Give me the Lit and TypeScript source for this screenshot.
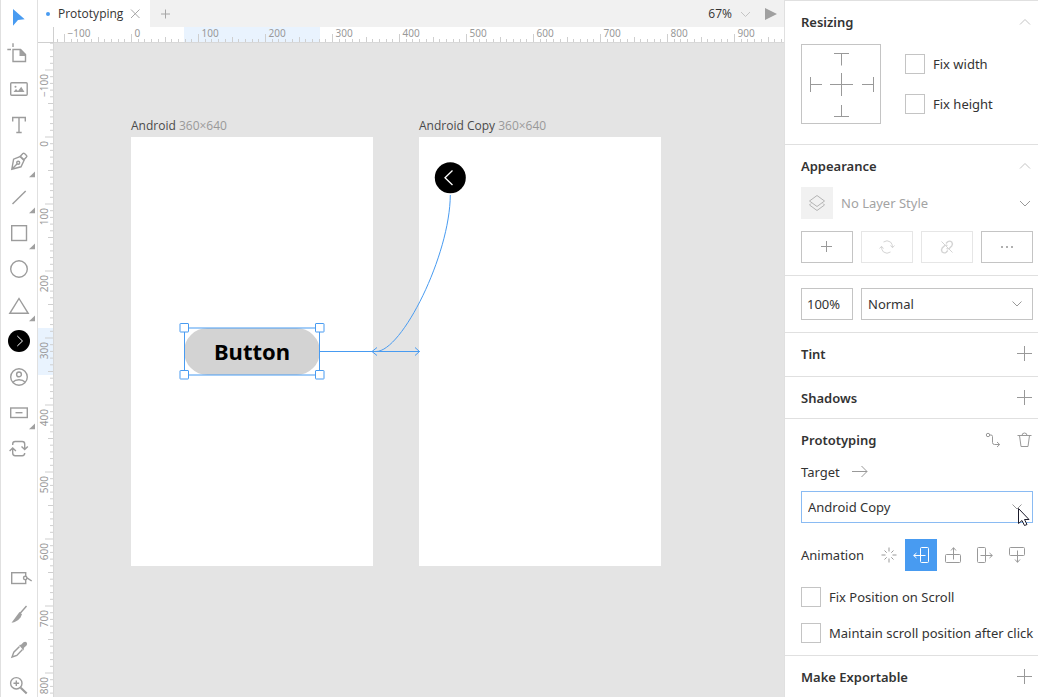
import { LitElement, html, svg, css, nothing } from "lit";
import { customElement, property, state } from "lit/decorators.js";
import { classMap } from "lit/directives/class-map.js";

const UNIT = 67;
const ORIGIN_X = 131;
const ORIGIN_Y = 137;

/* Tool glyphs share one 36x34 box whose vertical centre is y = 0. */
const tools = [
  { name: "Select", menu: false, art: svg`<path class="accent" d="M13-8 24.700 2.200 18 3 13 8.800z"/>` },
  { name: "Artboard", menu: false, art: svg`<path class="fold" d="M19.500-3.500H21l5 5v1.500h-6.500z"/><path d="M13-3.500h7.500L25.500 1.500v7H13zM7.300-3.500H11M13-9.800v3.800"/>` },
  { name: "Image", menu: false, art: svg`<rect x="10.700" y="-6.200" width="16.500" height="12.500" rx="1"/><path class="solid" d="M13.500 3l2.500-3 2 2 3.200-4.200L24.500 3z"/><circle class="solid" cx="15.500" cy="-2.300" r="1"/>` },
  { name: "Text", menu: false, art: svg`<path d="M12.700-3.500v-4h12.600v4M19-7.500V7.500M16.300 7.500h5.400"/>` },
  { name: "Pen", menu: true, art: svg`<path d="M11.800 8.300 13.600-1.800 20-4.500l4 4L21 5.800zM12 8l5-5"/><circle cx="18.200" cy="1.700" r="1.500"/><path d="M20.300-4.800l2.600-2.700q.8-.7 1.600 0l2 2q.8.8 0 1.600L24-1.200z"/>` },
  { name: "Line", menu: true, art: svg`<path d="M12.500 7 25.700-6"/>` },
  { name: "Rectangle", menu: true, art: svg`<rect x="11.700" y="-7.300" width="14.800" height="14.800"/>` },
  { name: "Ellipse", menu: false, art: svg`<circle cx="19" cy="0" r="8.300"/>` },
  { name: "Triangle", menu: true, art: svg`<path d="M19-6.500 28.200 8.300H9.800z"/>` },
  { name: "Icon", menu: false, art: svg`<circle class="disc" cx="19" cy="0" r="11"/><path class="light" d="M17.300-5 22.500 0l-5.200 5"/>` },
  { name: "Avatar", menu: false, art: svg`<circle cx="19" cy="0" r="8.300"/><circle cx="19" cy="-2.600" r="2.400"/><path d="M12.800 5.200Q15 2.800 19 2.800t6.200 2.400"/>` },
  { name: "Text Box", menu: true, art: svg`<rect x="10.700" y="-5" width="16.600" height="9.500"/><path d="M15.500-.3h7"/>` },
  { name: "Repeater", menu: false, art: svg`<path d="M12.700-4V-5q0-2.500 2.500-2.500h7q2.500 0 2.500 2.500V.300M21.500-2.500 24.700.500 27.800-2.500M24.700 4q0 2.700-2.500 2.700h-7q-2.500 0-2.500-2.700V-.800M9.600 2 12.700-1 15.900 2"/>` },
];

const lowerTools = [
  { name: "Hotspot", menu: false, art: svg`<rect x="11.700" y="-5.300" width="14" height="10.800"/><circle class="knob" cx="25.200" cy="0" r="1.700"/><path d="M27-.200 31.700 3"/>` },
  { name: "Knife", menu: false, art: svg`<path d="M26.500-8 20-.5"/><path class="solid" d="M19.500-2 22 .300 20.500 3.500Q17 8 11.500 8.800z"/>` },
  { name: "Color Picker", menu: false, art: svg`<path class="solid" d="M19-5l2-.300 2.500-2.500q2-1.200 3.200.300 1 1.500-.200 3L24-2.200 23.500.500z"/><path d="M19.500-3.500 13.800 2.200 12 7l4.800-1.600 5.700-5.900"/>` },
  { name: "Zoom", menu: false, art: svg`<circle cx="16.300" cy="-2.700" r="5.700"/><path d="M13.500-2.700h5.600M16.300-5.500v5.600"/><path class="thick" d="M20.700 1.700 26.700 7.500"/>` },
];

const animations = [
  { name: "None", art: svg`<path d="M8 .500v4M8 11.500v4M.500 8h4M11.500 8h4M3.500 3.500l2.200 2.200M12.500 3.500l-2.200 2.200M3.500 12.500l2.200-2.200M12.500 12.500l-2.200-2.200"/>` },
  { name: "Slide left", art: svg`<rect x="7.500" y=".5" width="8" height="15" rx="1"/><path d="M.700 8.500h11.800M3.500 6l-2.800 2.500 2.800 2.500"/>` },
  { name: "Slide up", art: svg`<rect x=".5" y="7.500" width="15" height="8" rx="1"/><path d="M8.500.700v11.800M6 3.500l2.500-2.800 2.500 2.800"/>` },
  { name: "Slide right", art: svg`<rect x=".5" y=".5" width="8" height="15" rx="1"/><path d="M3.500 8.500h11.800M12.500 6l2.800 2.500-2.800 2.500"/>` },
  { name: "Slide down", art: svg`<rect x=".5" y=".5" width="15" height="8" rx="1"/><path d="M8.500 3.500v11.800M6 12.500l2.500 2.800 2.500-2.800"/>` },
];

@customElement("tool-bar")
class ToolBar extends LitElement {
  static styles = css`
    :host {
      display: flex;
      flex-direction: column;
      gap: 2px;
      flex: none;
      width: 36px;
      background: #fff;
      border-left: 1px solid #e0e0e0;
      border-right: 1px solid #e0e0e0;
      overflow: hidden;
    }
    .tool {
      flex: none;
      display: block;
      height: 34px;
      padding: 0;
      border: 0;
      background: none;
    }
    .tool svg {
      display: block;
      fill: none;
      stroke: #9c9c9c;
      stroke-width: 1.4;
    }
    .lower {
      display: flex;
      flex-direction: column;
      gap: 2px;
      margin-top: auto;
      margin-bottom: -6px;
    }
    .accent { fill: #489bf1; stroke: none; }
    .solid, .fold { fill: #a0a0a0; stroke: none; }
    .disc { fill: #000; stroke: none; }
    .light { stroke: #fff; stroke-width: 1; }
    .knob { fill: #fff; }
    .thick { stroke-width: 2.2; }
  `;

  private tool(t: { name: string; menu: boolean; art: unknown }) {
    return html`<button class="tool" aria-label=${t.name} title=${t.name}>
      <svg width="36" height="34" viewBox="1 -17 36 34">
        ${t.art} ${t.menu ? svg`<path class="solid" d="M35 10.500V16.300H29z"/>` : nothing}
      </svg>
    </button>`;
  }

  render() {
    return html`${tools.map((t) => this.tool(t))}
      <div class="lower">${lowerTools.map((t) => this.tool(t))}</div>`;
  }
}

@customElement("scale-ruler")
class ScaleRuler extends LitElement {
  @property({ type: Boolean, reflect: true }) vertical = false;
  @state() private extent = 0;

  private observer = new ResizeObserver(() => {
    this.extent = this.vertical ? this.clientHeight : this.clientWidth;
  });

  connectedCallback() {
    super.connectedCallback();
    this.observer.observe(this);
  }

  disconnectedCallback() {
    super.disconnectedCallback();
    this.observer.disconnect();
  }

  static styles = css`
    :host {
      display: block;
      position: relative;
      background: #fff;
      overflow: hidden;
      min-width: 0;
      min-height: 0;
    }
    svg {
      position: absolute;
      inset: 0;
      width: 100%;
      height: 100%;
    }
    .tick { stroke: #cfcfcf; stroke-width: 1; }
    .label {
      font-family: "Noto Sans", "Open Sans", sans-serif;
      font-size: 10px;
      fill: #999;
    }
    .range { fill: #e9f3fe; }
    .edge { stroke: #d8d8d8; }
  `;

  private ticks() {
    const out = [];
    const origin = this.vertical ? ORIGIN_Y - 43 : ORIGIN_X - 54;
    for (let i = -14; origin + (i * UNIT) / 10 < this.extent; i++) {
      const length = i % 10 === 0 ? 8 : i % 5 === 0 ? 5 : 3;
      const at = origin + (i * UNIT) / 10;
      const label = i % 10 === 0 && at + 20 < this.extent ? String(i * 10).replace("-", "−") : "";
      if (this.vertical) {
        out.push(svg`<path class="tick" d="M${15 - length} ${at}H15"/>`);
        if (label)
          out.push(svg`<text class="label" text-anchor="end" transform="translate(10 ${at + 4}) rotate(-90)">${label}</text>`);
      } else {
        const x = Math.round(at) + 0.5;
        out.push(svg`<path class="tick" d="M${x} ${15 - length}V15"/>`);
        if (label) out.push(svg`<text class="label" x=${x + 3} y="10">${label}</text>`);
      }
    }
    return out;
  }

  render() {
    return this.vertical
      ? html`<svg aria-hidden="true"><rect class="range" y="285" width="16" height="47"/>${this.ticks()}<path class="edge" d="M15.500 0V${this.extent}"/></svg>`
      : html`<svg aria-hidden="true"><rect class="range" x="130" width="136" height="16"/>${this.ticks()}<path class="edge" d="M0 15.500H${this.extent}"/></svg>`;
  }
}

@customElement("design-canvas")
class DesignCanvas extends LitElement {
  static styles = css`
    :host {
      display: block;
      position: relative;
      background: #e4e4e4;
      overflow: hidden;
      font-family: "Open Sans", "Noto Sans", sans-serif;
    }
    .artboard {
      position: absolute;
      top: 94px;
      width: 242px;
      height: 429px;
      background: #fff;
    }
    .first { left: 77px; }
    .second { left: 365px; }
    .caption {
      position: absolute;
      bottom: 100%;
      left: 0;
      font-size: 12px;
      line-height: 22px;
      color: #4a4a4a;
      white-space: nowrap;
    }
    .size { color: #999; }
    .shape {
      position: absolute;
      top: 191px;
      left: 53px;
      width: 136px;
      height: 47px;
      padding: 0;
      border: 0;
      border-radius: 24px;
      background: #d3d3d3;
      color: #000;
      font: 700 22px/47px "Noto Sans", "Open Sans", sans-serif;
    }
    .overlay {
      position: absolute;
      inset: 0;
      width: 100%;
      height: 100%;
      fill: none;
      stroke: #489bf1;
      pointer-events: none;
    }
    .handle { fill: #fff; }
    .disc { fill: #000; stroke: none; }
    .light { stroke: #fff; stroke-width: 1.3; }
  `;

  render() {
    return html`
      <div class="artboard first">
        <div class="caption">Android <span class="size">360×640</span></div>
        <button class="shape">Button</button>
      </div>
      <div class="artboard second">
        <div class="caption">Android Copy <span class="size">360×640</span></div>
      </div>
      <svg class="overlay" aria-hidden="true">
        <g transform="translate(-54 -43)">
          <path d="M320 351.500H419.500M415 347.500l4.500 4-4.500 4M377 347.500l-5 4 5 4M450.300 195C450 255 402 351.500 376 351.500"/>
          <rect x="184.500" y="328" width="135" height="47"/>
          ${[[180, 323.5], [315.5, 323.5], [180, 370.5], [315.5, 370.5]].map(
            ([x, y]) => svg`<rect class="handle" x=${x} y=${y} width="8.500" height="8.500" rx=".5"/>`
          )}
          <circle class="disc" cx="450.300" cy="177.700" r="15.500"/>
          <path class="light" d="M452.500 170.500l-7.500 7.200 7.500 7.300"/>
        </g>
      </svg>
    `;
  }
}

@customElement("property-panel")
class PropertyPanel extends LitElement {
  @state() private animation = 1;

  static styles = css`
    :host {
      display: block;
      flex: none;
      width: 253px;
      border-left: 1px solid #e0e0e0;
      background: #fff;
      color: #333;
      font: 13px/22px "Noto Sans", "Open Sans", sans-serif;
      overflow: hidden;
    }
    section {
      border-top: 1px solid #e0e0e0;
      padding: 0 5px 12px 16px;
    }
    .resizing { padding-bottom: 20px; }
    .blend { padding-top: 12px; }
    .tint { padding-bottom: 1px; }
    .shadows, .export { padding-bottom: 0; }
    .head {
      display: flex;
      align-items: center;
      height: 42px;
    }
    .shadows .head { height: 41px; }
    h2 {
      flex: 1;
      margin: 0;
      font-size: 13px;
      font-weight: 600;
      line-height: 22px;
    }
    button {
      display: grid;
      place-items: center;
      padding: 0;
      border: 0;
      background: none;
      color: inherit;
      font: inherit;
    }
    svg {
      display: block;
      fill: none;
      stroke: #999;
    }
    .tiny { width: 16px; height: 16px; }
    .pale svg { stroke: #c4c4c4; }
    .actions { display: flex; gap: 16px; }
    .row { display: flex; gap: 8px; align-items: center; }
    .sizing {
      display: flex;
      align-items: center;
      gap: 24px;
      padding-top: 1px;
    }
    .anchors {
      box-sizing: border-box;
      width: 80px;
      height: 80px;
      border: 1px solid #c4c4c4;
    }
    .checks {
      display: flex;
      flex-direction: column;
      gap: 20px;
    }
    .check {
      display: flex;
      align-items: center;
      gap: 8px;
      height: 20px;
      white-space: nowrap;
    }
    .check input {
      appearance: none;
      flex: none;
      box-sizing: border-box;
      width: 20px;
      height: 20px;
      margin: 0;
      border: 1px solid #c4c4c4;
      background: #fff;
    }
    .layer {
      width: 100%;
      display: flex;
      color: #a3a3a3;
    }
    .layer .name { flex: 1; text-align: left; }
    .thumb {
      display: grid;
      place-items: center;
      width: 32px;
      height: 32px;
      background: #f1f1f1;
    }
    .thumb svg { stroke: #b4b4b4; }
    .buttons {
      display: grid;
      grid-template-columns: repeat(4, 1fr);
      gap: 8px;
      margin-top: 12px;
    }
    .boxed {
      box-sizing: border-box;
      height: 32px;
      border: 1px solid #c4c4c4;
    }
    .boxed:disabled { border-color: #e6e6e6; }
    .boxed:disabled svg { stroke: #d4d4d4; }
    .dots { fill: #b0b0b0; stroke: none; }
    .value {
      box-sizing: border-box;
      width: 52px;
      height: 32px;
      margin: 0;
      padding: 0 5px;
      border: 1px solid #c4c4c4;
      color: inherit;
      font: inherit;
    }
    .pick {
      position: relative;
      flex: 1;
    }
    .pick select {
      appearance: none;
      display: block;
      box-sizing: border-box;
      width: 100%;
      height: 32px;
      padding: 0 24px 0 6px;
      border: 1px solid #c4c4c4;
      border-radius: 0;
      background: #fff;
      color: inherit;
      font: inherit;
    }
    .pick .arrow {
      position: absolute;
      right: 8px;
      top: 8px;
      pointer-events: none;
    }
    .pick.focus select { border-color: #8abbf3; }
    .pointer {
      position: absolute;
      right: 2px;
      top: 16px;
      pointer-events: none;
      fill: #fff;
      stroke: #1b1b2b;
    }
    .target { height: 22px; gap: 12px; margin-bottom: 8px; }
    .animation {
      display: flex;
      align-items: center;
      margin: 16px 0;
    }
    .animation .label { width: 72px; }
    .option {
      width: 32px;
      height: 32px;
    }
    .option.on { background: #489bf1; }
    .option.on svg { stroke: #fff; }
    .scroll { gap: 16px; }
  `;

  private head(title: string, action: unknown) {
    return html`<div class="head"><h2>${title}</h2>${action}</div>`;
  }

  private up(label: string) {
    return html`<button class="pale" aria-label="Collapse ${label}"><svg class="tiny" viewBox="0 0 16 16"><path d="M3 10.500l5-5 5 5"/></svg></button>`;
  }

  private plus(label: string) {
    return html`<button aria-label="Add ${label}"><svg class="tiny" viewBox="0 0 16 16"><path d="M7.500 0v15M0 7.500h15"/></svg></button>`;
  }

  private arrow() {
    return html`<svg class="tiny arrow" viewBox="0 0 16 16"><path d="M3.500 5.500 8 10l4.500-4.500"/></svg>`;
  }

  private check(label: string) {
    return html`<label class="check"><input type="checkbox" />${label}</label>`;
  }

  render() {
    return html`
      <section class="resizing">
        ${this.head("Resizing", this.up("Resizing"))}
        <div class="sizing">
          <svg class="anchors" viewBox="0 0 78 78">
            <path d="M32 8.500h15M39.500 8.500v12M32 71.500h15M39.500 60v11.500M8.500 32v15M8.500 39.500H20M71.500 32v15M60 39.500h11.500M28 39.500h23M39.500 28v23"/>
          </svg>
          <div class="checks">${this.check("Fix width")} ${this.check("Fix height")}</div>
        </div>
      </section>

      <section>
        ${this.head("Appearance", this.up("Appearance"))}
        <button class="row layer">
          <span class="thumb"><svg width="18" height="18" viewBox="0 0 18 18"><path d="M9 1.500 16.500 7 9 12.500 1.500 7zM3 9.500l-1.500 1.500L9 16.500l7.500-5.500L15 9.500"/></svg></span>
          <span class="name">No Layer Style</span>
          <svg class="tiny" viewBox="0 0 16 16"><path d="M3 6l5 5 5-5"/></svg>
        </button>
        <div class="buttons">
          <button class="boxed" aria-label="Add style"><svg class="tiny" viewBox="0 0 16 16"><path d="M7.500 2v11M2 7.500h11"/></svg></button>
          <button class="boxed" aria-label="Update style" disabled><svg class="tiny" viewBox="0 0 16 16"><path d="M4.500 3Q8 .500 11.500 3 13.500 5 13.500 8.500M11.500 6.500l2 2.200 2-2.200M11.500 13Q8 15.500 4.500 13 2.500 11 2.500 7.500M.500 9.500l2-2.200 2 2.200"/></svg></button>
          <button class="boxed" aria-label="Detach style" disabled><svg class="tiny" viewBox="0 0 16 16"><path stroke-width="1.400" d="M7 4.500l1.700-1.700q2-1.500 4 .2 1.500 2 0 4L10.500 9.200Q9 10.300 7.500 9.500M8.800 11.500l-1.600 1.700q-2 1.500-4-.2-1.500-2 0-4L5.500 6.800Q7 5.700 8.500 6.500"/><path d="M2.500 2.500l11 11"/></svg></button>
          <button class="boxed" aria-label="More"><svg class="tiny dots" viewBox="0 0 16 16"><path d="M2 7h2v2H2zM7 7h2v2H7zM12 7h2v2h-2z"/></svg></button>
        </div>
      </section>

      <section class="blend">
        <div class="row">
          <input class="value" aria-label="Opacity" value="100%" />
          <div class="pick">
            <select aria-label="Blend mode"><option>Normal</option></select>
            ${this.arrow()}
          </div>
        </div>
      </section>

      <section class="tint">${this.head("Tint", this.plus("Tint"))}</section>
      <section class="shadows">${this.head("Shadows", this.plus("Shadows"))}</section>

      <section>
        ${this.head(
          "Prototyping",
          html`<div class="actions">
            <button aria-label="Link"><svg class="tiny" viewBox="0 0 16 16"><circle cx="3" cy="3" r="1.700"/><path d="M4.800 3h1.200q1.500 0 1.500 1.500v6Q7.500 12.500 9.500 12.500h5M12 10l2.700 2.500L12 15"/></svg></button>
            <button aria-label="Delete"><svg class="tiny" viewBox="0 0 16 16"><path d="M.500 3.500h14M2.500 3.500l1.500 11h7l1.500-11M5 3.500q0-2.500 2.500-2.500T10 3.500"/></svg></button>
          </div>`
        )}
        <div class="row target">
          <label for="target">Target</label>
          <svg class="tiny" viewBox="0 0 16 16"><path d="M0 7.500h15M9.500 2 15 7.500l-5.500 5.500"/></svg>
        </div>
        <div class="pick focus">
          <select id="target"><option>Android Copy</option></select>
          ${this.arrow()}
          <svg class="pointer" width="14" height="20" viewBox="0 0 14 20"><path d="M1.500 1.500v15l3.500-3 2.500 5 2.500-1-2.500-5h4.500z"/></svg>
        </div>
        <div class="animation" role="group" aria-label="Animation">
          <span class="label">Animation</span>
          ${animations.map(
            (a, i) => html`<button
              class=${classMap({ option: true, on: i === this.animation })}
              aria-label=${a.name}
              @click=${() => (this.animation = i)}
            ><svg class="tiny" viewBox="0 0 16 16">${a.art}</svg></button>`
          )}
        </div>
        <div class="checks scroll">
          ${this.check("Fix Position on Scroll")} ${this.check("Maintain scroll position after click")}
        </div>
      </section>

      <section class="export">${this.head("Make Exportable", this.plus("export"))}</section>
    `;
  }
}

@customElement("app-root")
class AppRoot extends LitElement {
  static styles = css`
    :host {
      display: flex;
      height: 100vh;
      overflow: hidden;
      background: #fff;
      color: #333;
      font: 12px/22px "Open Sans", "Noto Sans", sans-serif;
    }
    main {
      flex: 1;
      min-width: 0;
      display: grid;
      grid-template: 27px 16px 1fr / 16px 1fr;
    }
    .bar {
      grid-column: 1 / -1;
      display: flex;
      align-items: center;
      background: #f1f1f1;
    }
    .tab {
      display: flex;
      align-items: center;
      height: 100%;
      padding: 0 8px;
      background: #fff;
    }
    .dot {
      width: 4px;
      height: 4px;
      margin-right: 8px;
      border-radius: 50%;
      background: #489bf1;
    }
    button {
      display: flex;
      align-items: center;
      padding: 0;
      border: 0;
      background: none;
      color: inherit;
      font: inherit;
    }
    svg {
      display: block;
      fill: none;
      stroke: #a6a6a6;
    }
    .close { margin-left: 5px; }
    .add { margin-left: 8px; }
    .zoom { margin-left: auto; gap: 6px; }
    .play { margin: 0 6px 0 12px; }
    .play path { fill: #a0a0a0; stroke: none; }
    .corner {
      box-sizing: border-box;
      background: #fff;
      border-right: 1px solid #cfcfcf;
      border-bottom: 1px solid #cfcfcf;
    }
  `;

  render() {
    return html`
      <tool-bar></tool-bar>
      <main>
        <div class="bar">
          <div class="tab">
            <span class="dot"></span>
            <span>Prototyping</span>
            <button class="close" aria-label="Close tab"><svg width="14" height="14" viewBox="0 0 14 14"><path d="M3 2.500l8.500 8.500M11.500 2.500 3 11"/></svg></button>
          </div>
          <button class="add" aria-label="New tab"><svg width="14" height="14" viewBox="0 0 14 14"><path d="M7.500 2.500v9M3 7h9"/></svg></button>
          <button class="zoom">67%<svg width="14" height="14" viewBox="0 0 14 14"><path stroke="#c4c4c4" d="M3 5l4.500 4.500L12 5"/></svg></button>
          <button class="play" aria-label="Preview"><svg width="14" height="14" viewBox="0 0 14 14"><path d="M1 1l12 6-12 6z"/></svg></button>
        </div>
        <div class="corner"></div>
        <scale-ruler></scale-ruler>
        <scale-ruler vertical></scale-ruler>
        <design-canvas></design-canvas>
      </main>
      <property-panel></property-panel>
    `;
  }
}
